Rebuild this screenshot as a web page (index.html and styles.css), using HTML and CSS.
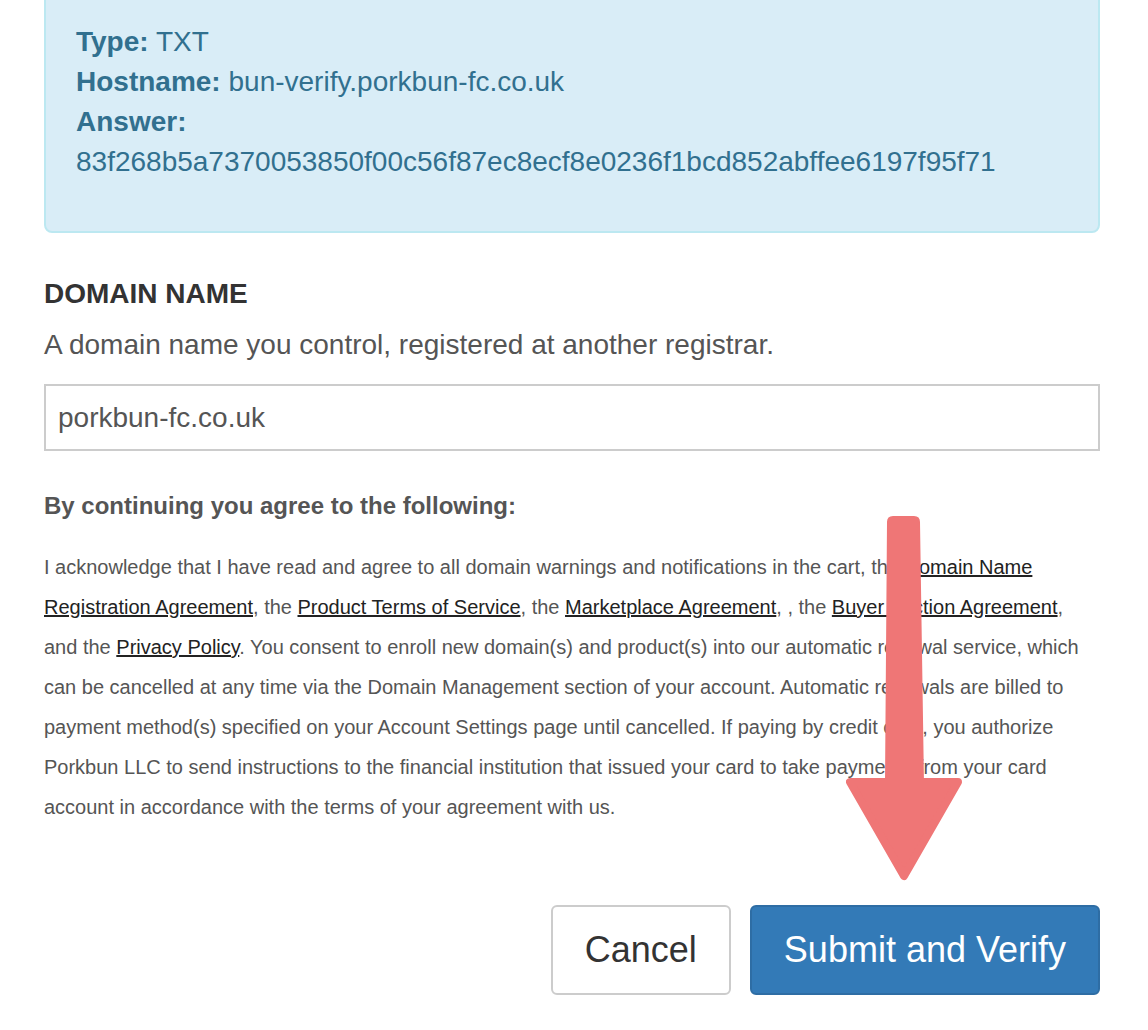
FILE: index.html
```html
<!DOCTYPE html>
<html lang="en">

<head>
  <meta charset="UTF-8">
  <meta name="viewport" content="width=device-width, initial-scale=1.0">
  <title>Verify Domain - Porkbun</title>
  <link rel="stylesheet" href="styles.css">
</head>

<body>
  <div class="verify-page">
    <div class="dns-alert">
      <div><strong>Type:</strong> TXT</div>
      <div><strong>Hostname:</strong> bun-verify.porkbun-fc.co.uk</div>
      <div><strong>Answer:</strong> 83f268b5a7370053850f00c56f87ec8ecf8e0236f1bcd852abffee6197f95f71</div>
    </div>

    <form class="verify-form" onsubmit="event.preventDefault()">
      <label class="field-label" for="domain">DOMAIN NAME</label>
      <p class="field-help">A domain name you control, registered at another registrar.</p>
      <input class="field-input" type="text" id="domain" name="domain" value="porkbun-fc.co.uk">

      <h4 class="terms-title">By continuing you agree to the following:</h4>
      <p class="terms-text">I acknowledge that I have read and agree to all domain warnings and notifications in the cart, the <a href="#">Domain Name Registration Agreement</a>, the <a href="#">Product Terms of Service</a>, the <a href="#">Marketplace Agreement</a>, , the <a href="#">Buyer Auction Agreement</a>, and the <a href="#">Privacy Policy</a>. You consent to enroll new domain(s) and product(s) into our automatic renewal service, which can be cancelled at any time via the Domain Management section of your account. Automatic renewals are billed to payment method(s) specified on your Account Settings page until cancelled. If paying by credit card, you authorize Porkbun LLC to send instructions to the financial institution that issued your card to take payments from your card account in accordance with the terms of your agreement with us.</p>

      <div class="form-actions">
        <button type="button" class="btn btn-default">Cancel</button>
        <button type="submit" class="btn btn-primary">Submit and Verify</button>
      </div>
    </form>

    <!-- highlight arrow pointing at the submit button -->
    <svg class="hint-arrow" width="116" height="366" viewBox="0 0 116 366">
      <path d="M41 6 Q41 0 47 0 L68 0 Q74 0 74 6 L78 268 L39 268 Z" fill="#ef7676" />
      <polygon points="4,266 112,266 58,360" fill="#ef7676" stroke="#ef7676" stroke-width="8"
        stroke-linejoin="round" />
    </svg>
  </div>
</body>

</html>
```

FILE: styles.css
```css
:root {
  --info-bg: #D9EDF7;
  --info-border: #BCE8F1;
  --info-text: #31708F;
  --text-dark: #333333;
  --text-muted: #555555;
  --primary: #337AB7;
  --border-gray: #CCCCCC;
}

* {
  margin: 0;
  padding: 0;
  box-sizing: border-box;
}

body {
  font-family: 'Liberation Sans', Arial, sans-serif;
  background: #FFFFFF;
  color: var(--text-dark);
  overflow: hidden;
}

.verify-page {
  display: flow-root;
  position: relative;
  padding: 0 48px 0 44px;
}

.dns-alert {
  margin-top: -10px;
  padding: 30px 30px 49px;
  background: var(--info-bg);
  border: 2px solid var(--info-border);
  border-radius: 8px;
  color: var(--info-text);
  font-size: 28px;
  line-height: 40px;
}

.dns-alert strong {
  font-weight: 700;
}

.verify-form {
  display: flex;
  flex-direction: column;
}

.field-label {
  margin-top: 41px;
  font-size: 28px;
  line-height: 40px;
  font-weight: 700;
  color: var(--text-dark);
}

.field-help {
  margin-top: 11px;
  font-size: 28px;
  line-height: 40px;
  color: var(--text-muted);
}

.field-input {
  margin-top: 19px;
  width: 100%;
  height: 67px;
  padding: 0 12px;
  border: 2px solid var(--border-gray);
  border-radius: 0;
  font-family: inherit;
  font-size: 28px;
  color: var(--text-muted);
  background: #FFFFFF;
  outline: none;
}

.terms-title {
  margin-top: 35px;
  font-size: 24px;
  line-height: 40px;
  font-weight: 700;
  color: var(--text-muted);
}

.terms-text {
  margin-top: 21px;
  font-size: 20px;
  line-height: 40px;
  color: var(--text-muted);
}

.terms-text a {
  color: #222222;
  text-decoration: underline;
}

.form-actions {
  margin-top: 78px;
  display: flex;
  justify-content: flex-end;
  gap: 19px;
}

.btn {
  height: 90px;
  padding: 0 32px;
  border: 2px solid transparent;
  border-radius: 6px;
  font-family: inherit;
  font-size: 36px;
  cursor: pointer;
}

.btn-default {
  background: #FFFFFF;
  border-color: var(--border-gray);
  color: var(--text-dark);
}

.btn-primary {
  background: var(--primary);
  border-color: #2E6DA4;
  color: #FFFFFF;
}

.hint-arrow {
  position: absolute;
  left: 846px;
  top: 516px;
}
```
